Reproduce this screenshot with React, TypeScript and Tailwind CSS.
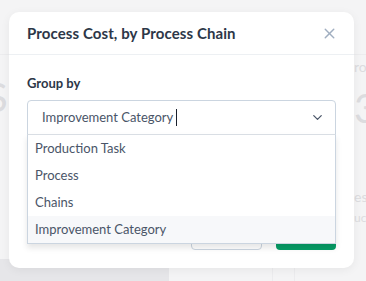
import { ChevronDown, X } from "lucide-react";

const options = ["Production Task", "Process", "Chains", "Improvement Category"];

export default function App() {
  return (
    <div
      className="relative w-[366px] h-[281px] overflow-hidden bg-[#f4f4f5]"
      style={{ fontFamily: "Lato, 'Open Sans', sans-serif" }}
    >
      {/* Dimmed page behind the modal */}
      <div className="absolute inset-0 flex flex-col">
        <div className="h-[55px] border-b border-[#ececee]" />
        <div className="flex-1 flex justify-between text-[#dcdcdf]">
          <div className="w-[9px] flex flex-col">
            <span className="text-[40px] leading-none mt-[22px] -ml-[14px]">S</span>
          </div>
          <div className="w-[12px] flex flex-col items-start overflow-hidden">
            <span className="text-[14px] leading-none mt-[5px]">ro</span>
            <span className="text-[40px] leading-none mt-[14px]">3</span>
            <span className="text-[14px] leading-none mt-[62px]">es</span>
            <span className="text-[12px] leading-none mt-[8px]">uc</span>
          </div>
        </div>
        <div className="h-[22px] flex">
          <div className="w-[169px] bg-[#e6e6e9]" />
          <div className="flex-1 flex">
            <div className="w-[104px] border-r border-[#ececee]" />
            <div className="w-[22px] border-r border-[#ececee]" />
          </div>
        </div>
      </div>

      {/* Modal */}
      <div className="absolute left-[9px] top-[12px] w-[345px] h-[256px] bg-white rounded-[10px] shadow-[0_2px_10px_rgba(0,0,0,0.06)] flex flex-col">
        <div className="h-[43px] px-[18px] flex items-center justify-between border-b border-[#edf0f3]">
          <h2 className="text-[15px] font-bold text-[#2d3748] tracking-[0.1px]">
            Process Cost, by Process Chain
          </h2>
          <X className="w-[17px] h-[17px] text-[#a0aec0] -mr-[2px]" strokeWidth={2} />
        </div>

        <div className="relative px-[18px] pt-[19px]">
          <label className="block text-[13px] font-bold text-[#2d3748] leading-[18px]">Group by</label>
          <div className="relative mt-[8px]">
            <div className="h-[35px] border border-[#cbd5e0] rounded-t-[4px] flex items-center pl-[14px] pr-[10px]">
              <span className="text-[13px] text-[#4a5568]">Improvement Category</span>
              <span className="ml-[3px] w-[1px] h-[17px] bg-[#1a202c]" />
              <ChevronDown className="ml-auto w-[15px] h-[15px] text-[#4a5568]" strokeWidth={2} />
            </div>
            <ul className="absolute z-10 left-0 right-0 top-[34px] bg-white border border-[#cbd5e0] border-t-[#d9dee4] shadow-[0_4px_6px_rgba(0,0,0,0.1)]">
              {options.map((o) => (
                <li
                  key={o}
                  className={`h-[27px] flex items-center pl-[7px] text-[13px] text-[#4a5568] ${
                    o === "Improvement Category" ? "bg-[#f7f8fa]" : ""
                  }`}
                >
                  {o}
                </li>
              ))}
            </ul>
          </div>
        </div>

        <div className="mt-auto px-[18px] pb-[18px] flex justify-end gap-[14px]">
          <button className="w-[71px] h-[36px] rounded-[4px] border border-[#cbd5e0] bg-white" />
          <button className="w-[60px] h-[36px] rounded-[4px] bg-[#069d66]" />
        </div>
      </div>
    </div>
  );
}
